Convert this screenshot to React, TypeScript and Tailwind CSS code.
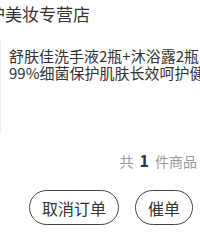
import React from 'react';

const font = "font-['Noto_Sans_CJK_SC','Noto_Sans',sans-serif]";

export default function App() {
  return (
    <div className={`w-[200px] h-[240px] overflow-hidden bg-white ${font}`}>
      <div className="-ml-[100px] w-[300px]">
        {/* store name */}
        <div className="pl-[20px] pt-[3px] text-[17px] leading-[22px] text-[#333] whitespace-nowrap">
          舒肤佳个护美妆专营店
        </div>

        {/* product row */}
        <div className="flex gap-[8px] mt-[8px]">
          <div className="ml-[9px] w-[92px] h-[106px] shrink-0 rounded-lg border border-[#ededed] bg-[#fafafa]" />
          <div className="w-[214px] shrink-0 pt-[14px] text-[15px] leading-[17px] text-[#333] line-clamp-2">
            舒肤佳洗手液2瓶+沐浴露2瓶 99%细菌保护肌肤长效呵护健康
          </div>
        </div>

        {/* count */}
        <div className="flex justify-end items-baseline pr-[3px] mt-[11px] text-[14px] leading-[20px] text-[#999]">
          <span>共</span>
          <span className="mx-[6px] text-[16px] font-bold text-[#333]">1</span>
          <span>件商品</span>
        </div>

        {/* actions */}
        <div className="flex justify-end gap-[16px] pr-[7px] mt-[19px]">
          <button className="h-[35px] px-[12px] rounded-full border border-[#444] text-[16px] text-[#333] bg-white">
            取消订单
          </button>
          <button className="h-[35px] px-[12px] rounded-full border border-[#444] text-[16px] text-[#333] bg-white">
            催单
          </button>
        </div>
      </div>
    </div>
  );
}
